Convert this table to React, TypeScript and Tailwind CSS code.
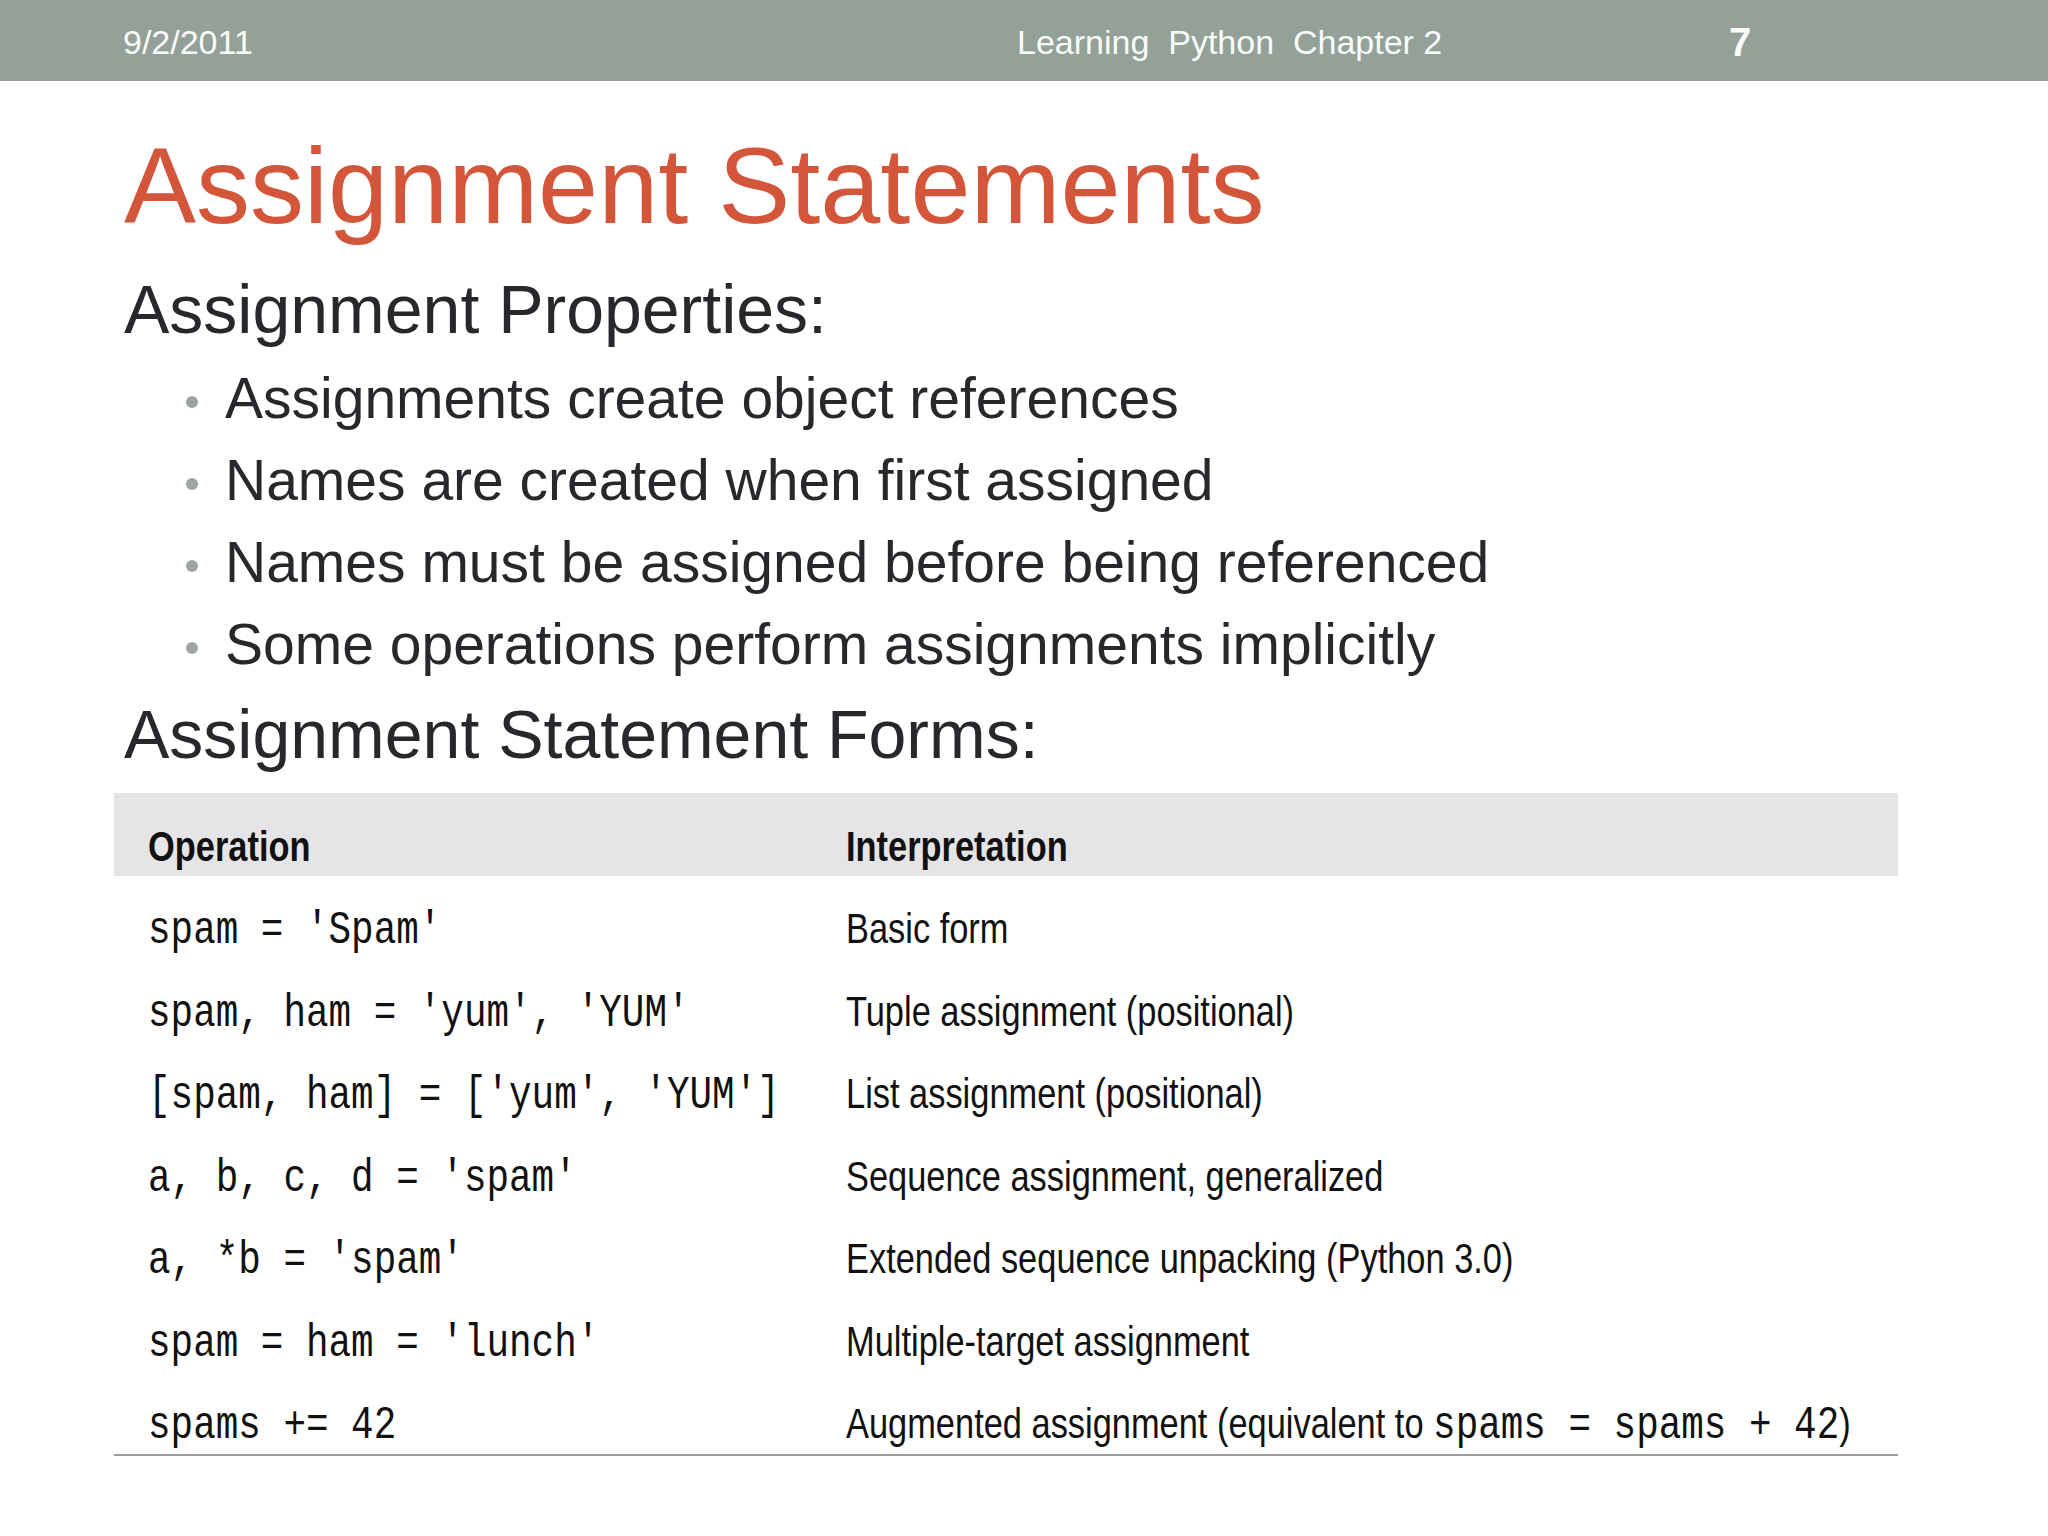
import React from "react";

const sans = "font-['Liberation_Sans',Arial,sans-serif]";
const mono = "font-['Liberation_Mono','Courier_New',monospace] text-[47px]";

type Row = {
  op: string;
  meaning: React.ReactNode;
};

const rows: Row[] = [
  {op: "spam = 'Spam'", meaning: "Basic form"},
  {op: "spam, ham = 'yum', 'YUM'", meaning: "Tuple assignment (positional)"},
  {op: "[spam, ham] = ['yum', 'YUM']", meaning: "List assignment (positional)"},
  {op: "a, b, c, d = 'spam'", meaning: "Sequence assignment, generalized"},
  {op: "a, *b = 'spam'", meaning: "Extended sequence unpacking (Python 3.0)"},
  {op: "spam = ham = 'lunch'", meaning: "Multiple-target assignment"},
  {
    op: "spams += 42",
    meaning: (
      <>
        Augmented assignment (equivalent to{" "}
        <span className={mono}>spams = spams + 42</span>)
      </>
    ),
  },
];

const bullets = [
  "Assignments create object references",
  "Names are created when first assigned",
  "Names must be assigned before being referenced",
  "Some operations perform assignments implicitly",
];

const App: React.FC = () => {
  return (
    <div className={`w-[2048px] h-[1536px] bg-white ${sans}`}>
      {/* top bar */}
      <div className="flex items-center h-[81px] pt-[2px] pl-[123px] bg-[#93a199] text-[#fafcfa]">
        <div className="w-[894px] shrink-0 text-[34px] leading-none">9/2/2011</div>
        <div className="w-[712px] shrink-0 text-[34px] leading-none whitespace-pre">
          Learning  Python  Chapter 2
        </div>
        <div className="text-[40px] leading-none font-bold">7</div>
      </div>

      <div className="pl-[124px]">
        <h1 className="mt-[51px] text-[108px] leading-none text-[#d4563a]">
          Assignment Statements
        </h1>
        <h2 className="mt-[35px] text-[68px] leading-none text-[#28282c]">
          Assignment Properties:
        </h2>
        <ul className="mt-[14px] pl-[62px]">
          {bullets.map((b, i) => (
            <li key={i} className="flex items-center h-[82px]">
              <span className="w-[12px] h-[12px] mt-[8px] shrink-0 rounded-full bg-[#9ea5a1]" />
              <span className="ml-[27px] text-[57px] leading-[82px] text-[#28282c]">
                {b}
              </span>
            </li>
          ))}
        </ul>
        <h2 className="mt-[15px] text-[68px] leading-none text-[#28282c]">
          Assignment Statement Forms:
        </h2>
      </div>

      {/* table */}
      <div className="mt-[25px] ml-[114px] w-[1784px] border-b-2 border-[#9c9c9c] text-[#111]">
        <div className="flex items-baseline h-[83px] pt-[32px] pl-[34px] bg-[#e5e5e7]">
          <div className="w-[698px] shrink-0 text-[43px] leading-none">
            <span className="inline-block origin-left scale-x-80 font-bold">Operation</span>
          </div>
          <div className="text-[43px] leading-none">
            <span className="inline-block origin-left scale-x-80 font-bold">Interpretation</span>
          </div>
        </div>
        {rows.map((row, index) => (
          <div key={index} className="flex items-baseline h-[82.5px] pt-[31px] pl-[34px]">
            <div className={`w-[698px] shrink-0 leading-none whitespace-pre ${mono}`}>
              <span className="inline-block origin-left scale-x-80">{row.op}</span>
            </div>
            <div className="text-[43px] leading-none whitespace-nowrap">
              <span className="inline-block origin-left scale-x-80">{row.meaning}</span>
            </div>
          </div>
        ))}
      </div>
    </div>
  );
};

export default App;
